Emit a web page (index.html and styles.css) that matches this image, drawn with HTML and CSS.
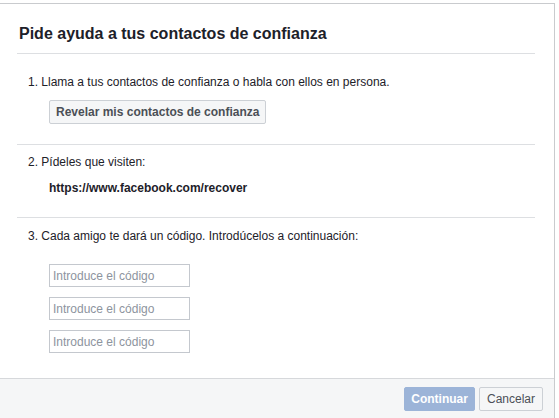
FILE: index.html
```html
<!DOCTYPE html>
<html lang="es">
<head>
<meta charset="utf-8">
<title>Pide ayuda a tus contactos de confianza</title>
<link rel="stylesheet" href="styles.css">
</head>
<body>
<div class="dialog">
  <div class="content">
    <div class="header">
      <h2 class="title">Pide ayuda a tus contactos de confianza</h2>
    </div>
    <div class="body">
      <div class="step step-first">
        <div class="step-text">1. Llama a tus contactos de confianza o habla con ellos en persona.</div>
        <button class="btn btn-reveal" type="button">Revelar mis contactos de confianza</button>
      </div>
      <div class="step step-second">
        <div class="step-text">2. Pídeles que visiten:</div>
        <div class="url">https://www.facebook.com/recover</div>
      </div>
      <div class="step step-last">
        <div class="step-text">3. Cada amigo te dará un código. Introdúcelos a continuación:</div>
        <div class="codes">
          <input class="code" type="text" placeholder="Introduce el código">
          <input class="code" type="text" placeholder="Introduce el código">
          <input class="code" type="text" placeholder="Introduce el código">
        </div>
      </div>
    </div>
  </div>
  <div class="footer">
    <button class="btn btn-primary" type="button">Continuar</button>
    <button class="btn btn-cancel" type="button">Cancelar</button>
  </div>
</div>
</body>
</html>
```

FILE: styles.css
```css
html, body {
  margin: 0;
  padding: 0;
  background: #ffffff;
}

body {
  font-family: "Liberation Sans", Arial, Helvetica, sans-serif;
  font-size: 12px;
  line-height: 16px;
  color: #1d2129;
  overflow: hidden;
}

.dialog {
  margin-top: 3px;
  width: 554px;
  height: 414px;
  border-top: 1px solid #c9cbce;
  border-right: 1px solid #c9cbce;
  display: flex;
  flex-direction: column;
  background: #ffffff;
}

.content {
  flex: none;
}

.header {
  margin: 0 19px 0 17px;
  padding: 20px 0 9px;
  border-bottom: 1px solid #dddfe2;
}

.title {
  margin: 0;
  padding-left: 2px;
  font-size: 16px;
  line-height: 20px;
  font-weight: bold;
  color: #1d2129;
}

.body {
  margin: 0 19px 0 17px;
}

.step {
  padding-left: 11px;
}

.step-first {
  padding-top: 20px;
  padding-bottom: 20px;
  border-bottom: 1px solid #dddfe2;
}

.step-second {
  padding-top: 9px;
  padding-bottom: 21px;
  border-bottom: 1px solid #dddfe2;
}

.step-last {
  padding-top: 10px;
  padding-bottom: 25px;
}

.step-text {
  color: #1d2129;
}

.url {
  margin-top: 10px;
  margin-left: 21px;
  font-weight: bold;
  color: #1d2129;
}

.btn {
  box-sizing: border-box;
  height: 24px;
  margin: 0;
  border: 1px solid #ccd0d5;
  border-radius: 2px;
  background: #f5f6f7;
  color: #4b4f56;
  font-family: "Liberation Sans", Arial, Helvetica, sans-serif;
  font-size: 12px;
  line-height: 22px;
  font-weight: bold;
  padding: 0 6px;
  cursor: pointer;
}

.btn-reveal {
  display: block;
  margin-top: 10px;
  margin-left: 21px;
}

.codes {
  margin-top: 20px;
  margin-left: 21px;
  display: flex;
  flex-direction: column;
  align-items: flex-start;
  gap: 10px;
}

.code {
  box-sizing: border-box;
  width: 141px;
  height: 23px;
  margin: 0;
  padding: 0 3px;
  border: 1px solid #c4c8ce;
  border-radius: 0;
  font-family: "Liberation Sans", Arial, Helvetica, sans-serif;
  font-size: 12px;
  color: #1d2129;
  background: #ffffff;
  outline: none;
}

.code::placeholder {
  color: #8d949e;
  opacity: 1;
}

.footer {
  flex: 1;
  display: flex;
  justify-content: flex-end;
  align-items: flex-start;
  gap: 4px;
  padding: 8px 11px 0 0;
  border-top: 1px solid #d6d8db;
  background: #f5f6f7;
}

.btn-primary {
  background: #9cb4d8;
  border-color: #9cb4d8;
  color: #ffffff;
  padding: 0 6px;
}

.btn-cancel {
  font-weight: normal;
  padding: 0 7px;
  color: #4b4f56;
}
```
